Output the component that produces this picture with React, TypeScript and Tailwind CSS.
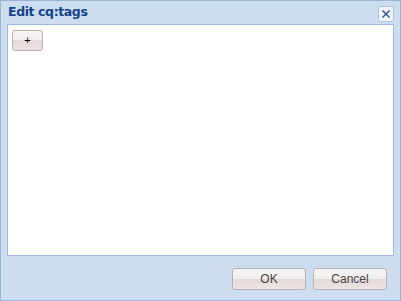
export default function App() {
  return (
    <div className="w-[401px] h-[301px] bg-[#cbddee] border border-[#99b5d2] flex flex-col font-['DejaVu_Sans',sans-serif]">
      <div className="h-[23px] flex items-center justify-between pl-[7px] pr-[6px]">
        <span className="text-[12.5px] font-bold text-[#15428b] font-['DejaVu_Sans',sans-serif] tracking-[-0.4px]">Edit cq:tags</span>
        <button
          type="button"
          className="w-[16px] h-[16px] mt-[2px] rounded-[2px] border border-[#a9c3dd] bg-[#eef4fa] flex items-center justify-center"
        >
          <svg width="10" height="10" viewBox="0 0 10 10" stroke="#2b4f86" strokeWidth={1.4} fill="none">
            <path d="M1.5 1.5 L8.5 8.5 M8.5 1.5 L1.5 8.5" />
          </svg>
        </button>
      </div>
      <div className="flex-1 mx-[6px] border border-[#99bbe8] bg-white p-[5px] pl-[4px]">
        <button
          type="button"
          className="w-[31px] h-[21px] rounded-[3px] border border-[#b9b0b0] bg-[linear-gradient(#f7f3f3_0%,#f3eeee_50%,#e4d8d9_50%,#ece4e4_100%)] text-[11px] text-black font-['Liberation_Sans',sans-serif] flex items-center justify-center"
        >
          +
        </button>
      </div>
      <div className="h-[44px] flex items-center justify-end gap-[7px] pr-[13px] pt-[1px]">
        <button
          type="button"
          className="w-[74px] h-[22px] rounded-[3px] border border-[#b9b0b0] bg-[linear-gradient(#f7f3f3_0%,#f3eeee_50%,#e4d8d9_50%,#ece4e4_100%)] text-[12px] text-[#444] font-['Liberation_Sans',sans-serif]"
        >
          OK
        </button>
        <button
          type="button"
          className="w-[74px] h-[22px] rounded-[3px] border border-[#b9b0b0] bg-[linear-gradient(#f7f3f3_0%,#f3eeee_50%,#e4d8d9_50%,#ece4e4_100%)] text-[12px] text-[#444] font-['Liberation_Sans',sans-serif]"
        >
          Cancel
        </button>
      </div>
    </div>
  )
}
